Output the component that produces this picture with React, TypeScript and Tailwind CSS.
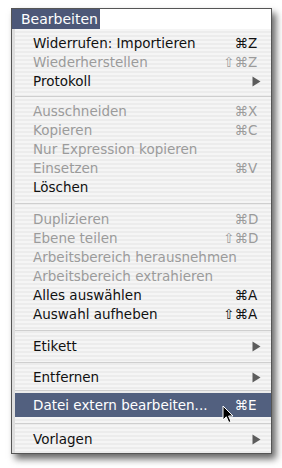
import React from "react";

type Item =
  | { kind: "item"; t: string; mod?: string; key?: string; dis?: boolean; sub?: boolean; h?: number; hi?: boolean }
  | { kind: "sep"; h: number };

const items: Item[] = [
  { kind: "item", t: "Widerrufen: Importieren", mod: "⌘", key: "Z" },
  { kind: "item", t: "Wiederherstellen", mod: "⇧⌘", key: "Z", dis: true },
  { kind: "item", t: "Protokoll", sub: true },
  { kind: "sep", h: 11 },
  { kind: "item", t: "Ausschneiden", mod: "⌘", key: "X", dis: true },
  { kind: "item", t: "Kopieren", mod: "⌘", key: "C", dis: true },
  { kind: "item", t: "Nur Expression kopieren", dis: true },
  { kind: "item", t: "Einsetzen", mod: "⌘", key: "V", dis: true },
  { kind: "item", t: "Löschen" },
  { kind: "sep", h: 13 },
  { kind: "item", t: "Duplizieren", mod: "⌘", key: "D", dis: true },
  { kind: "item", t: "Ebene teilen", mod: "⇧⌘", key: "D", dis: true },
  { kind: "item", t: "Arbeitsbereich herausnehmen", dis: true },
  { kind: "item", t: "Arbeitsbereich extrahieren", dis: true },
  { kind: "item", t: "Alles auswählen", mod: "⌘", key: "A" },
  { kind: "item", t: "Auswahl aufheben", mod: "⇧⌘", key: "A" },
  { kind: "sep", h: 13 },
  { kind: "item", t: "Etikett", sub: true },
  { kind: "sep", h: 12 },
  { kind: "item", t: "Entfernen", sub: true },
  { kind: "sep", h: 6 },
  { kind: "item", t: "Datei extern bearbeiten...", mod: "⌘", key: "E", hi: true, h: 24 },
  { kind: "sep", h: 12 },
  { kind: "item", t: "Vorlagen", sub: true, h: 20 },
];

function Arrow({ color }: { color: string }) {
  return (
    <svg width="9" height="11" viewBox="0 0 9 11" className="block">
      <path d="M0.5 0.5 L8.5 5.5 L0.5 10.5 Z" fill={color} />
    </svg>
  );
}

function Cursor() {
  return (
    <svg width="13" height="19" viewBox="0 0 13 19" className="block">
      <path
        d="M1 1 L1 15 L4.3 11.8 L6.8 17.5 L9 16.5 L6.6 11 L11 11 Z"
        fill="#000"
        stroke="#fff"
        strokeWidth="1"
        strokeLinejoin="round"
      />
    </svg>
  );
}

export default function App() {
  return (
    <div className="w-[282px] h-[468px] bg-white pl-[11px] pt-[8px] overflow-hidden" style={{ fontFamily: '"DejaVu Sans", sans-serif' }}>
      <div className="relative w-[261px] h-[446px] border border-[#555555] bg-white shadow-[4px_5px_7px_rgba(0,0,0,0.6)] flex flex-col">
        <div className="flex h-[20px] shrink-0">
          <div className="w-[88px] h-full bg-[#4d5878] text-white text-[14px] leading-[20px] pl-[9px] whitespace-nowrap">
            Bearbeiten
          </div>
          <div className="flex-1 bg-white" />
        </div>
        <div className="flex-1 flex flex-col pt-[5px] bg-[image:repeating-linear-gradient(0deg,#ececec_0px,#ececec_2px,#f5f5f5_2px,#f5f5f5_4px)] border-l-[3px] border-l-[#dedede]">
          {items.map((it, i) => {
            if (it.kind === "sep") {
              return (
                <div key={i} className="flex flex-col justify-center" style={{ height: it.h }}>
                  <div className="h-px bg-[#cfcfcf]" />
                </div>
              );
            }
            const color = it.hi ? "#ffffff" : it.dis ? "#9b9b9b" : "#111111";
            return (
              <div
                key={i}
                className={`flex items-center pl-[18px] text-[13.5px] ${it.hi ? "bg-[#52607f]" : ""}`}
                style={{ height: it.h ?? 19, color }}
              >
                <span className="flex-1 whitespace-nowrap">{it.t}</span>
                {it.key && (
                  <span className="flex pr-[12px] whitespace-nowrap">
                    <span>{it.mod}</span>
                    <span className="w-[11px] text-left">{it.key}</span>
                  </span>
                )}
                {it.sub && (
                  <span className="pr-[10px]">
                    <Arrow color="#5c5c5c" />
                  </span>
                )}
              </div>
            );
          })}
        </div>
        <div className="absolute left-[210px] top-[396px]">
          <Cursor />
        </div>
      </div>
    </div>
  );
}
